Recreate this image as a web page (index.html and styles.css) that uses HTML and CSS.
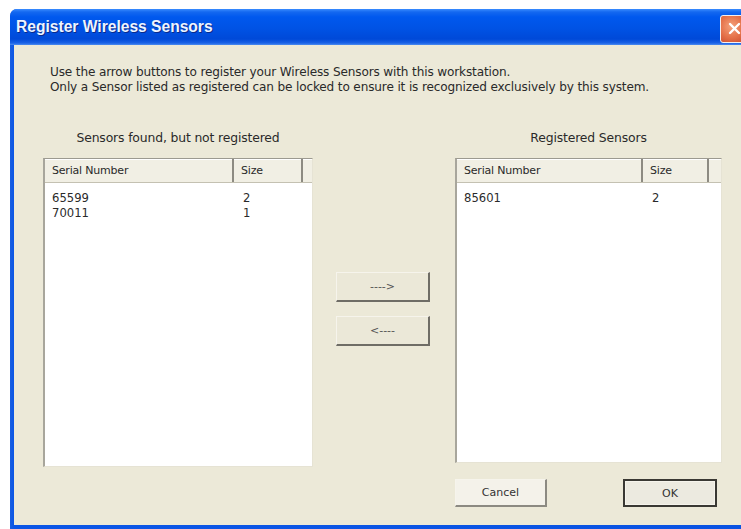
FILE: index.html
```html
<!DOCTYPE html>
<html lang="en">
<head>
<meta charset="utf-8">
<title>Register Wireless Sensors</title>
<link rel="stylesheet" href="styles.css">
</head>
<body>
<div class="window">
  <div class="titlebar">
    <span class="title">Register Wireless Sensors</span>
    <span class="close" aria-label="Close">
      <svg width="21" height="21" viewBox="0 0 21 21"><path d="M6 6 L15 15 M15 6 L6 15" stroke="#fff" stroke-width="2.4" stroke-linecap="round"/></svg>
    </span>
  </div>
  <div class="client">
    <p class="intro">Use the arrow buttons to register your Wireless Sensors with this workstation.<br>Only a Sensor listed as registered can be locked to ensure it is recognized exclusively by this system.</p>
    <div class="panes">
      <div class="pane pane-left">
        <div class="caption">Sensors found, but not registered</div>
        <div class="list list-left">
          <div class="header">
            <span class="col col-serial">Serial Number</span>
            <span class="col col-size">Size</span>
            <span class="col col-fill"></span>
          </div>
          <div class="rows">
            <div class="row"><span class="cell cell-serial">65599</span><span class="cell">2</span></div>
            <div class="row"><span class="cell cell-serial">70011</span><span class="cell">1</span></div>
          </div>
        </div>
      </div>
      <div class="pane pane-mid">
        <button class="btn btn-arrow">----&gt;</button>
        <button class="btn btn-arrow">&lt;----</button>
      </div>
      <div class="pane pane-right">
        <div class="caption">Registered Sensors</div>
        <div class="list list-right">
          <div class="header">
            <span class="col col-serial">Serial Number</span>
            <span class="col col-size">Size</span>
            <span class="col col-fill"></span>
          </div>
          <div class="rows">
            <div class="row"><span class="cell cell-serial">85601</span><span class="cell">2</span></div>
          </div>
        </div>
        <div class="actions">
          <button class="btn btn-cancel">Cancel</button>
          <button class="btn btn-ok">OK</button>
        </div>
      </div>
    </div>
  </div>
</div>
</body>
</html>
```

FILE: styles.css
```css
html, body {
  margin: 0;
  padding: 0;
  background: #ffffff;
  overflow: hidden;
}

body {
  width: 741px;
  height: 529px;
  font-family: "DejaVu Sans", Verdana, sans-serif;
  font-size: 11px;
  color: #2a2a2a;
}

.window {
  margin: 9px 0 0 10px;
  width: 760px;
  height: 520px;
  display: flex;
  flex-direction: column;
  background: linear-gradient(to right, #1a5fe0 0, #0b56e6 4px, #0a53e2 100%);
  border-radius: 7px 7px 0 0;
}

.titlebar {
  height: 36px;
  flex: none;
  display: flex;
  align-items: center;
  padding-left: 6px;
  border-radius: 7px 7px 0 0;
  background: linear-gradient(to bottom, #3a8cff 0, #1468f0 3px, #0058ee 8px, #0052e4 20px, #0049d8 30px, #1a62e6 34px, #4c8cf0 36px);
}

.title {
  color: #eef4ff;
  font-family: "Liberation Sans", Arial, sans-serif;
  font-weight: bold;
  font-size: 15.6px;
  text-shadow: 1px 1px 0 #0a2a8a;
  flex: 1;
}

.close {
  width: 26px;
  height: 26px;
  margin-right: 22px;
  margin-top: 3px;
  border: 1px solid #f4f0f0;
  border-radius: 3px;
  background: radial-gradient(circle at 40% 40%, #f4a27c 0, #e5724a 50%, #c8462a 100%);
  display: flex;
  align-items: center;
  justify-content: center;
}

.client {
  flex: 1;
  margin: 0 4px 4px 4px;
  background: #ece9d8;
  padding: 20px 0 0 29px;
}

.intro {
  margin: 0 0 35px 7px;
  line-height: 15px;
  font-size: 12.1px;
  letter-spacing: -0.15px;
}

.panes {
  display: flex;
  align-items: flex-start;
}

.pane-left { width: 270px; }
.pane-mid {
  width: 94px;
  margin-left: 23px;
  padding-top: 142px;
  display: flex;
  flex-direction: column;
  gap: 14px;
}
.pane-right {
  width: 267px;
  margin-left: 25px;
}

.caption {
  height: 15px;
  line-height: 15px;
  text-align: center;
  margin-bottom: 13px;
  font-size: 12.4px;
  letter-spacing: -0.15px;
}

.list {
  background: #ffffff;
  border-top: 1px solid #9c9a90;
  border-left: 2px solid #a8a69c;
  border-right: 1px solid #e6e3d4;
  border-bottom: 1px solid #e6e3d4;
  box-sizing: border-box;
  display: flex;
  flex-direction: column;
}
.list-left { height: 309px; }
.list-right { height: 305px; }

.header {
  height: 23px;
  flex: none;
  display: flex;
  background: #f1efe4;
  border-bottom: 1px solid #c4c1b2;
  box-shadow: inset 0 1px 0 #ffffff;
}

.col {
  display: flex;
  align-items: center;
  padding-left: 7px;
  box-sizing: border-box;
  border-right: 2px solid #8d8b82;
  letter-spacing: -0.2px;
}
.list-left .col-serial { width: 189px; }
.list-left .col-size { width: 69px; }
.list-right .col-serial { width: 186px; }
.list-right .col-size { width: 66px; }
.col-fill { flex: 1; border-right: none; }

.rows {
  padding-top: 8px;
  font-size: 11.6px;
}
.row {
  display: flex;
  height: 15px;
  line-height: 15px;
}
.cell { padding-left: 7px; }
.list-left .cell-serial { width: 182px; }
.list-right .cell-serial { width: 179px; }
.cell-serial + .cell { padding-left: 9px; }

.btn {
  font-family: "DejaVu Sans", Verdana, sans-serif;
  font-size: 11px;
  color: #333;
  box-sizing: border-box;
  background: #efece0;
  border-top: 1px solid #f6f4ec;
  border-left: 1px solid #f6f4ec;
  border-right: 2px solid #6f6d66;
  border-bottom: 2px solid #6f6d66;
  padding: 0;
}

.btn-arrow {
  width: 94px;
  height: 30px;
  background: #ebe8d8;
  color: #555;
}

.actions {
  margin-top: 16px;
  display: flex;
  justify-content: space-between;
  padding-right: 5px;
}

.btn-cancel {
  width: 92px;
  height: 28px;
  background: #f4f2ea;
  border-right-color: #8c8a82;
  border-bottom-color: #8c8a82;
}

.btn-ok {
  width: 94px;
  height: 28px;
  border: 2px solid #3a3934;
  background: #eceae0;
  box-shadow: inset 0 0 0 1px #f6f4ec;
}
```
